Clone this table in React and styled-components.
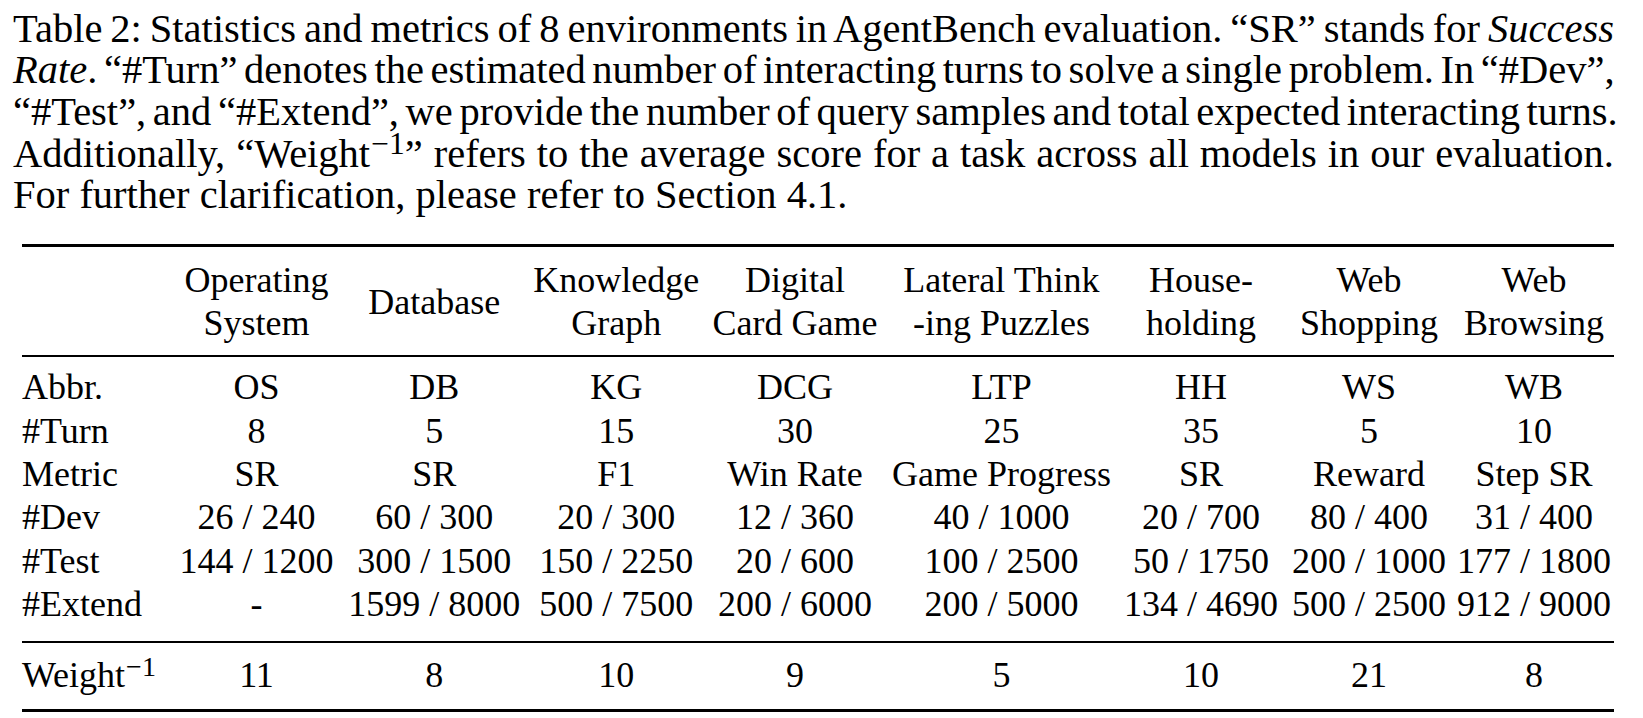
import styled, { createGlobalStyle } from "styled-components";

const GlobalStyle = createGlobalStyle`
  body {
    margin: 0;
    background: #ffffff;
    color: #000000;
    font-family: "Liberation Serif", "Times New Roman", serif;
  }
`;

const columns = [
  { key: "label", width: 150 },
  { key: "os", width: 169, head: ["Operating", "System"] },
  { key: "db", width: 186.5, head: ["Database"] },
  { key: "kg", width: 177.5, head: ["Knowledge", "Graph"] },
  { key: "dcg", width: 180, head: ["Digital", "Card Game"] },
  { key: "ltp", width: 233, head: ["Lateral Think", "-ing Puzzles"] },
  { key: "hh", width: 166, head: ["House-", "holding"] },
  { key: "ws", width: 170, head: ["Web", "Shopping"] },
  { key: "wb", width: 160, head: ["Web", "Browsing"] },
];

const rows = [
  ["Abbr.", "OS", "DB", "KG", "DCG", "LTP", "HH", "WS", "WB"],
  ["#Turn", "8", "5", "15", "30", "25", "35", "5", "10"],
  ["Metric", "SR", "SR", "F1", "Win Rate", "Game Progress", "SR", "Reward", "Step SR"],
  ["#Dev", "26 / 240", "60 / 300", "20 / 300", "12 / 360", "40 / 1000", "20 / 700", "80 / 400", "31 / 400"],
  ["#Test", "144 / 1200", "300 / 1500", "150 / 2250", "20 / 600", "100 / 2500", "50 / 1750", "200 / 1000", "177 / 1800"],
  ["#Extend", "-", "1599 / 8000", "500 / 7500", "200 / 6000", "200 / 5000", "134 / 4690", "500 / 2500", "912 / 9000"],
];

const weights = ["11", "8", "10", "9", "5", "10", "21", "8"];

export default function App() {
  return (
    <>
      <GlobalStyle />
      <Page>
        <Caption>
          <CaptionLine>
            Table 2: Statistics and metrics of 8 environments in AgentBench evaluation. “SR” stands for <em>Success</em>
          </CaptionLine>
          <CaptionLine>
            <em>Rate</em>. “#Turn” denotes the estimated number of interacting turns to solve a single problem. In “#Dev”,
          </CaptionLine>
          <CaptionLine>
            “#Test”, and “#Extend”, we provide the number of query samples and total expected interacting turns.
          </CaptionLine>
          <CaptionLine>
            Additionally, “Weight<Sup>−1</Sup>” refers to the average score for a task across all models in our evaluation.
          </CaptionLine>
          <CaptionLine $last>For further clarification, please refer to Section 4.1.</CaptionLine>
        </Caption>

        <Table>
          <colgroup>
            {columns.map((c) => (
              <Col key={c.key} $w={c.width} />
            ))}
          </colgroup>
          <thead>
            <tr>
              {columns.map((c) => (
                <HeadCell key={c.key}>
                  {c.head &&
                    c.head.map((line, i) => (
                      <HeadLine key={i}>{line}</HeadLine>
                    ))}
                </HeadCell>
              ))}
            </tr>
          </thead>
          <tbody>
            {rows.map((r, i) => (
              <Row
                key={r[0]}
                $top={i === 0 ? 9 : 0}
                $bottom={i === rows.length - 1 ? 15 : 0}
              >
                {r.map((v, j) =>
                  j === 0 ? <LabelCell key={j}>{v}</LabelCell> : <Cell key={j}>{v}</Cell>
                )}
              </Row>
            ))}
            <Row $top={11} $bottom={11} $ruled>
              <LabelCell>
                Weight<Sup>−1</Sup>
              </LabelCell>
              {weights.map((w, j) => (
                <Cell key={j}>{w}</Cell>
              ))}
            </Row>
          </tbody>
        </Table>
      </Page>
    </>
  );
}

const Page = styled.main`
  width: 1601px;
  padding: 7.5px 0 0 13px;
`;

const Caption = styled.div`
  font-size: 40.5px;
  line-height: 41.67px;
`;

// TeX squeezes the justified caption lines a little; the last line keeps natural spacing
const CaptionLine = styled.div`
  white-space: nowrap;
  text-align: ${(p) => (p.$last ? "left" : "justify")};
  text-align-last: ${(p) => (p.$last ? "left" : "justify")};
  word-spacing: ${(p) => (p.$last ? "0" : "-3.5px")};

  em {
    font-style: italic;
  }
`;

const Sup = styled.sup`
  font-size: 0.78em;
  line-height: 0;
  vertical-align: 0.4em;
  margin-left: 1px;
`;

const Table = styled.table`
  margin: 28px 0 0 9px;
  width: 1592px;
  table-layout: fixed;
  border-collapse: separate;
  border-spacing: 0;
  font-size: 36px;
  line-height: 43.3px;
`;

const Col = styled.col`
  width: ${(p) => p.$w}px;
`;

const HeadCell = styled.th`
  font-weight: normal;
  text-align: center;
  vertical-align: middle;
  padding: 12px 0 10px;
  border-top: 3px solid #000;
  border-bottom: 2px solid #000;
  white-space: nowrap;
`;

const HeadLine = styled.div``;

const Row = styled.tr`
  & > td {
    padding-top: ${(p) => p.$top}px;
    padding-bottom: ${(p) => p.$bottom}px;
    border-top: ${(p) => (p.$ruled ? "2px solid #000" : "none")};
    border-bottom: ${(p) => (p.$ruled ? "3px solid #000" : "none")};
  }
`;

const Cell = styled.td`
  text-align: center;
  white-space: nowrap;
  padding-left: 0;
  padding-right: 0;
`;

const LabelCell = styled(Cell)`
  text-align: left;
`;
